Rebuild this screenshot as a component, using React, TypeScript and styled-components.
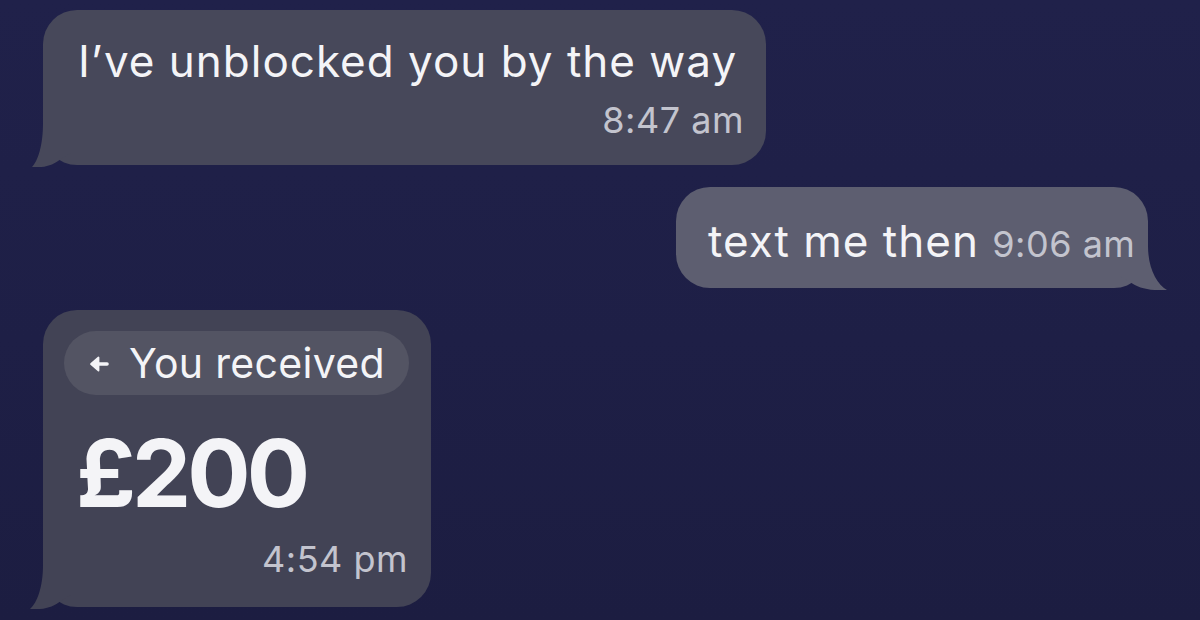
import React from 'react';
import styled, { createGlobalStyle } from 'styled-components';

const GlobalStyle = createGlobalStyle`
  html, body {
    margin: 0;
    padding: 0;
    background: #1e1f45;
  }
  body {
    font-family: Inter, "Noto Sans", "Liberation Sans", sans-serif;
    -webkit-font-smoothing: antialiased;
  }
`

const Thread = styled.div`
  width: 1200px;
  height: 620px;
  box-sizing: border-box;
  padding: 10px 52px 0 43px;
  display: flex;
  flex-direction: column;
  gap: 22px;
  overflow: hidden;
  background: linear-gradient(180deg, #20214a 0%, #1e1f46 55%, #1c1d41 100%);
`

type Side = 'in' | 'out';

const Bubble = styled.div<{ side: Side; tone: string; w: number; h: number; pad: string }>`
  position: relative;
  isolation: isolate;
  align-self: ${(p) => (p.side === 'in' ? 'flex-start' : 'flex-end')};
  width: ${(p) => p.w}px;
  height: ${(p) => p.h}px;
  padding: ${(p) => p.pad};
  background: ${(p) => p.tone};
  border-radius: 34px;
  color: #f4f4f7;
  box-sizing: border-box;
`

// the little curled corner sits under the bubble's text
const Tail = styled.svg<{ side: Side; reach: number }>`
  position: absolute;
  z-index: -1;
  bottom: -2px;
  height: 44px;
  ${(p) => (p.side === 'in' ? `left: -${p.reach}px;` : `right: -${p.reach}px; transform: scaleX(-1);`)}
`

const Body = styled.div`
  font-size: 44px;
  line-height: 52px;
  letter-spacing: 1px;
  white-space: nowrap;
`

const Time = styled.span`
  font-size: 36px;
  color: #c3c4ce;
  letter-spacing: 0.5px;
`

const StackedTime = styled.div<{ top: number }>`
  margin-top: ${(p) => p.top}px;
  text-align: right;
  line-height: 40px;
`

const Pill = styled.div`
  display: inline-flex;
  align-items: center;
  gap: 20px;
  height: 64px;
  padding: 0 24px 0 25px;
  box-sizing: border-box;
  border-radius: 32px;
  background: #535463;
  font-size: 41px;
  letter-spacing: 0.3px;
  white-space: nowrap;
  color: #f4f4f7;
`

const ArrowIcon = styled.svg`
  flex-shrink: 0;
  width: 20px;
  height: 18px;
  margin-top: 2px;
`

const Amount = styled.div`
  font-size: 94px;
  font-weight: 700;
  letter-spacing: -4px;
  line-height: 100px;
  margin: 28px 0 0 12px;
`

function BubbleTail({ side, tone, reach }: { side: Side; tone: string; reach: number }) {
  const r = reach;
  const d = `M ${r} 0 C ${r} 22 ${r * 0.55} 38 0 44 C ${r * 0.5 + 8} 45 ${r + 10} 42 ${r + 18} 36 L ${r + 28} 30 L ${r + 28} 0 Z`;
  return (
    <Tail side={side} reach={r} width={r + 28} viewBox={`0 0 ${r + 28} 44`}>
      <path d={d} fill={tone} />
    </Tail>
  );
}

function BackArrow() {
  return (
    <ArrowIcon viewBox="0 0 20 18">
      <path d="M2 9 L9.5 2.5 L9.5 15.5 Z" fill="#f4f4f7" stroke="#f4f4f7" strokeWidth="1.8" strokeLinejoin="round" />
      <path d="M8 9 H18" stroke="#f4f4f7" strokeWidth="3.6" strokeLinecap="round" />
    </ArrowIcon>
  );
}

export default function App() {
  return (
    <>
      <GlobalStyle />
      <Thread>
        <Bubble side="in" tone="#47485a" w={723} h={155} pad="25px 22px 0 35px">
          <BubbleTail side="in" tone="#47485a" reach={11} />
          <Body>I’ve unblocked you by the way</Body>
          <StackedTime top={13}>
            <Time>8:47 am</Time>
          </StackedTime>
        </Bubble>

        <Bubble side="out" tone="#5d5e70" w={472} h={101} pad="28px 0 0 32px">
          <BubbleTail side="out" tone="#5d5e70" reach={19} />
          <Body>
            text me then <Time>9:06 am</Time>
          </Body>
        </Bubble>

        <Bubble side="in" tone="#424355" w={388} h={297} pad="21px 23px 0 21px">
          <BubbleTail side="in" tone="#424355" reach={13} />
          <Pill>
            <BackArrow />
            You received
          </Pill>
          <Amount>£200</Amount>
          <StackedTime top={16}>
            <Time>4:54 pm</Time>
          </StackedTime>
        </Bubble>
      </Thread>
    </>
  );
}
